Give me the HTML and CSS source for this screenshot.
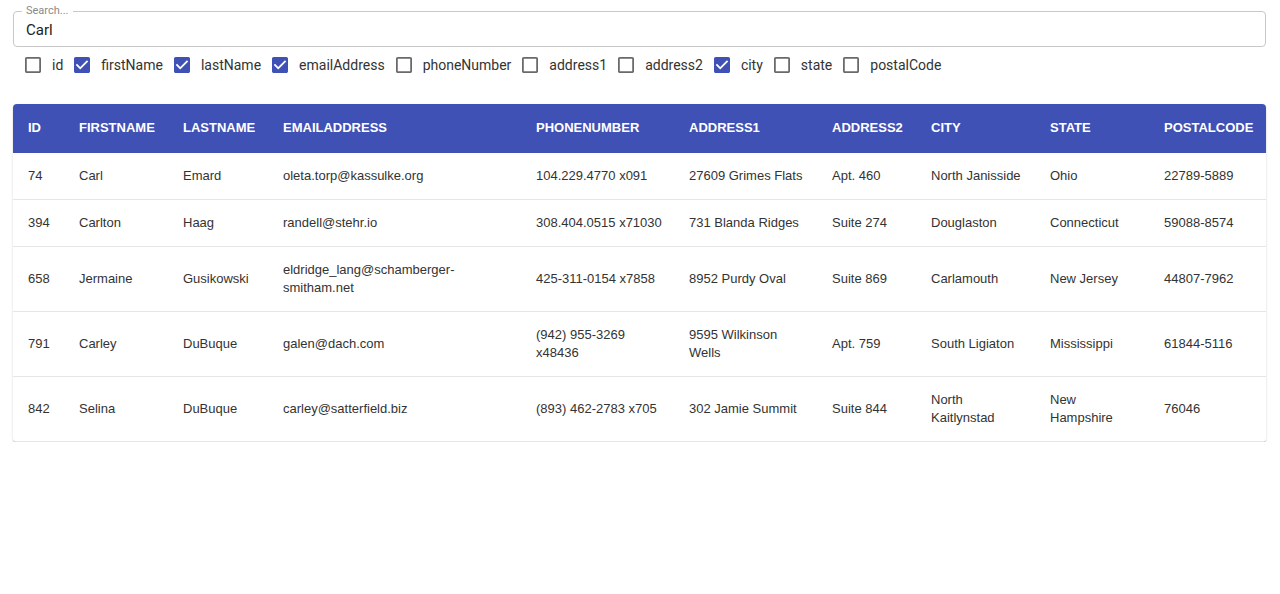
FILE: index.html
```html
<!DOCTYPE html>
<html>
<head>
<meta charset="utf-8">
<link rel="stylesheet" href="styles.css">
</head>
<body>
<div class="page">
  <div class="field">
    <span class="field-label">Search...</span>
    <div class="field-input">Carl</div>
  </div>

  <div class="filters">
    <label class="chk"><svg class="box" viewBox="3 3 18 18"><path class="off" d="M19 5v14H5V5h14m0-2H5c-1.1 0-2 .9-2 2v14c0 1.1.9 2 2 2h14c1.1 0 2-.9 2-2V5c0-1.1-.9-2-2-2z"/></svg><span>id</span></label>
    <label class="chk"><svg class="box" viewBox="3 3 18 18"><path class="on" d="M19 3H5c-1.11 0-2 .9-2 2v14c0 1.1.89 2 2 2h14c1.11 0 2-.9 2-2V5c0-1.1-.89-2-2-2zm-9 14l-5-5 1.41-1.41L10 14.170l7.59-7.59L19 8l-9 9z"/></svg><span>firstName</span></label>
    <label class="chk"><svg class="box" viewBox="3 3 18 18"><path class="on" d="M19 3H5c-1.11 0-2 .9-2 2v14c0 1.1.89 2 2 2h14c1.11 0 2-.9 2-2V5c0-1.1-.89-2-2-2zm-9 14l-5-5 1.41-1.41L10 14.17l7.59-7.59L19 8l-9 9z"/></svg><span>lastName</span></label>
    <label class="chk"><svg class="box" viewBox="3 3 18 18"><path class="on" d="M19 3H5c-1.11 0-2 .9-2 2v14c0 1.1.89 2 2 2h14c1.11 0 2-.9 2-2V5c0-1.1-.89-2-2-2zm-9 14l-5-5 1.41-1.41L10 14.17l7.59-7.59L19 8l-9 9z"/></svg><span>emailAddress</span></label>
    <label class="chk"><svg class="box" viewBox="3 3 18 18"><path class="off" d="M19 5v14H5V5h14m0-2H5c-1.1 0-2 .9-2 2v14c0 1.1.9 2 2 2h14c1.1 0 2-.9 2-2V5c0-1.1-.9-2-2-2z"/></svg><span>phoneNumber</span></label>
    <label class="chk"><svg class="box" viewBox="3 3 18 18"><path class="off" d="M19 5v14H5V5h14m0-2H5c-1.1 0-2 .9-2 2v14c0 1.1.9 2 2 2h14c1.1 0 2-.9 2-2V5c0-1.1-.9-2-2-2z"/></svg><span>address1</span></label>
    <label class="chk"><svg class="box" viewBox="3 3 18 18"><path class="off" d="M19 5v14H5V5h14m0-2H5c-1.1 0-2 .9-2 2v14c0 1.1.9 2 2 2h14c1.1 0 2-.9 2-2V5c0-1.1-.9-2-2-2z"/></svg><span>address2</span></label>
    <label class="chk"><svg class="box" viewBox="3 3 18 18"><path class="on" d="M19 3H5c-1.11 0-2 .9-2 2v14c0 1.1.89 2 2 2h14c1.11 0 2-.9 2-2V5c0-1.1-.89-2-2-2zm-9 14l-5-5 1.41-1.41L10 14.17l7.59-7.59L19 8l-9 9z"/></svg><span>city</span></label>
    <label class="chk"><svg class="box" viewBox="3 3 18 18"><path class="off" d="M19 5v14H5V5h14m0-2H5c-1.1 0-2 .9-2 2v14c0 1.1.9 2 2 2h14c1.1 0 2-.9 2-2V5c0-1.1-.9-2-2-2z"/></svg><span>state</span></label>
    <label class="chk"><svg class="box" viewBox="3 3 18 18"><path class="off" d="M19 5v14H5V5h14m0-2H5c-1.1 0-2 .9-2 2v14c0 1.1.9 2 2 2h14c1.1 0 2-.9 2-2V5c0-1.1-.9-2-2-2z"/></svg><span>postalCode</span></label>
  </div>

  <div class="paper">
    <table class="grid">
      <colgroup>
        <col class="c-id"><col class="c-first"><col class="c-last"><col class="c-email"><col class="c-phone">
        <col class="c-a1"><col class="c-a2"><col class="c-city"><col class="c-state"><col class="c-zip">
      </colgroup>
      <thead>
        <tr><th>ID</th><th>FIRSTNAME</th><th>LASTNAME</th><th>EMAILADDRESS</th><th>PHONENUMBER</th><th>ADDRESS1</th><th>ADDRESS2</th><th>CITY</th><th>STATE</th><th>POSTALCODE</th></tr>
      </thead>
      <tbody>
        <tr><td>74</td><td>Carl</td><td>Emard</td><td>oleta.torp@kassulke.org</td><td>104.229.4770 x091</td><td>27609 Grimes Flats</td><td>Apt. 460</td><td>North Janisside</td><td>Ohio</td><td>22789-5889</td></tr>
        <tr><td>394</td><td>Carlton</td><td>Haag</td><td>randell@stehr.io</td><td>308.404.0515 x71030</td><td>731 Blanda Ridges</td><td>Suite 274</td><td>Douglaston</td><td>Connecticut</td><td>59088-8574</td></tr>
        <tr><td>658</td><td>Jermaine</td><td>Gusikowski</td><td>eldridge_lang@schamberger-smitham.net</td><td>425-311-0154 x7858</td><td>8952 Purdy Oval</td><td>Suite 869</td><td>Carlamouth</td><td>New Jersey</td><td>44807-7962</td></tr>
        <tr><td>791</td><td>Carley</td><td>DuBuque</td><td>galen@dach.com</td><td>(942) 955-3269 x48436</td><td>9595 Wilkinson Wells</td><td>Apt. 759</td><td>South Ligiaton</td><td>Mississippi</td><td>61844-5116</td></tr>
        <tr><td>842</td><td>Selina</td><td>DuBuque</td><td>carley@satterfield.biz</td><td>(893) 462-2783 x705</td><td>302 Jamie Summit</td><td>Suite 844</td><td>North Kaitlynstad</td><td>New Hampshire</td><td>76046</td></tr>
      </tbody>
    </table>
  </div>
</div>
</body>
</html>
```

FILE: styles.css
```css
html, body {
  margin: 0;
  padding: 0;
  background: #fff;
}

.page {
  padding: 11px 14px 0 13px;
  font-family: Roboto, "Liberation Sans", Arial, sans-serif;
}

.field {
  position: relative;
  height: 36px;
  border: 1px solid #c8c8c8;
  border-radius: 4px;
  box-sizing: border-box;
  display: flex;
  align-items: center;
  padding: 0 12px;
}

.field-label {
  position: absolute;
  left: 8px;
  top: -7px;
  padding: 0 4px;
  background: #fff;
  font-size: 11px;
  line-height: 12px;
  color: #8a8a8a;
}

.field-input {
  font-size: 15px;
  color: #222;
  padding-top: 1px;
}

.filters {
  display: flex;
  align-items: center;
  height: 24px;
  margin-top: 6px;
  padding-left: 12px;
}

.chk {
  display: flex;
  align-items: center;
  font-size: 14px;
  color: #333;
  margin-right: 11px;
}

.chk span {
  margin-left: 11px;
}

.box {
  width: 16px;
  height: 16px;
  display: block;
}

.box .off {
  fill: #6a6a6a;
}

.box .on {
  fill: #3f51b5;
}

.paper {
  margin-top: 27px;
  border-radius: 4px;
  overflow: hidden;
  box-shadow: 0 2px 1px -1px rgba(0,0,0,0.2), 0 1px 1px 0 rgba(0,0,0,0.14), 0 1px 3px 0 rgba(0,0,0,0.12);
}

.grid {
  width: 100%;
  border-collapse: collapse;
  table-layout: fixed;
  font-family: "Liberation Sans", Arial, sans-serif;
  font-size: 13px;
  line-height: 18px;
}

.c-id { width: 51px; }
.c-first { width: 104px; }
.c-last { width: 100px; }
.c-email { width: 253px; }
.c-phone { width: 153px; }
.c-a1 { width: 143px; }
.c-a2 { width: 99px; }
.c-city { width: 119px; }
.c-state { width: 114px; }
.c-zip { width: 117px; }

.grid th {
  background: #3f51b5;
  color: #fff;
  font-weight: bold;
  text-align: left;
  padding: 15px 8px 16px 15px;
}

.grid td {
  color: #333;
  padding: 14px 10px 14px 15px;
  border-bottom: 1px solid #e6e6e6;
  vertical-align: middle;
  word-wrap: break-word;
}
```
